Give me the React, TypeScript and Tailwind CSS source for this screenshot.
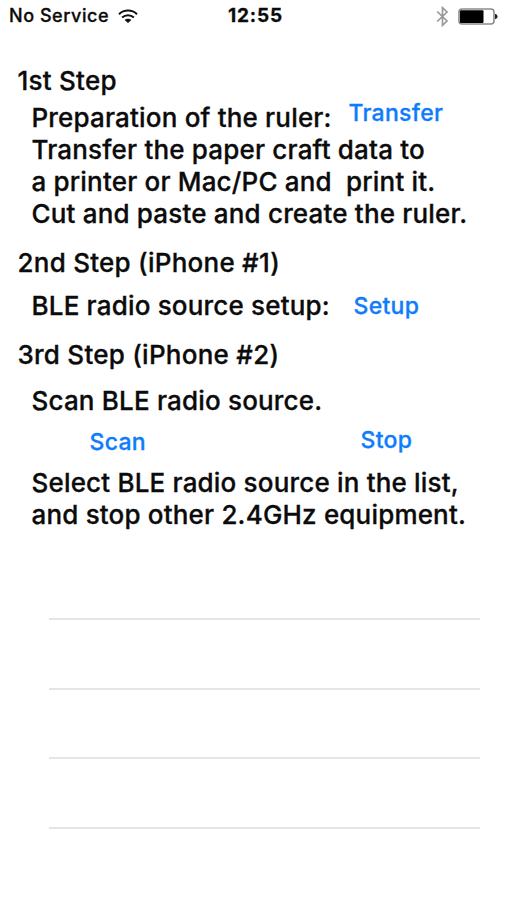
import type { ReactNode } from "react";

const StepTitle = ({ children, className = "" }: { children: ReactNode; className?: string }) => (
  <h2 className={`h-8 pl-[17.5px] leading-8 tracking-[0.25px] whitespace-pre ${className}`}>{children}</h2>
);

const StepText = ({ children, className = "" }: { children: ReactNode; className?: string }) => (
  <p className={`h-8 leading-8 tracking-[0.18px] whitespace-pre ${className}`}>{children}</p>
);

const LinkButton = ({ children, className = "" }: { children: ReactNode; className?: string }) => (
  <button className={`h-7 text-[23px] leading-7 tracking-[0.3px] text-[#0f7dfa] ${className}`}>{children}</button>
);

const StatusBar = () => (
  <header className="grid h-8 grid-cols-3 items-center pl-[9px] pr-[9px] text-lg leading-8">
    <div className="flex items-center gap-[9px] whitespace-nowrap tracking-[0.55px]">
      No Service
      <svg width="20" height="15" viewBox="0 0 20 15" fill="none" stroke="#111" strokeWidth="2">
        <path d="M1 5.2C6 .4 14 .4 19 5.2" />
        <path d="M4.1 8.5C7.4 5.4 12.6 5.4 15.9 8.5" />
        <path d="M10 14L6.6 10.9C8.5 9.2 11.5 9.2 13.4 10.9Z" fill="#111" stroke="none" />
      </svg>
    </div>
    <time className="pl-1 text-center text-[19px] font-bold tracking-[0.8px]">12:55</time>
    <div className="flex items-center justify-end gap-[9px]">
      <svg width="13" height="21" viewBox="0 0 13 21" fill="none" stroke="#999" strokeWidth="1.7">
        <path d="M1.2 5.5L11 15L6.5 19.3V1.7L11 6L1.2 15.5" />
      </svg>
      <svg width="40" height="17" viewBox="0 0 40 17">
        <rect x="1" y="1" width="35" height="15" rx="3" fill="#fff" stroke="#8c8c8c" strokeWidth="1.6" />
        <rect x="2" y="2.3" width="23.5" height="12.6" rx="1" fill="#000" />
        <path d="M37 5.8Q39.6 6.2 39.6 8.5T37 11.2Z" fill="#222" />
      </svg>
    </div>
  </header>
);

const App = () => {
  return (
    <div className="flex h-[900px] w-full flex-col overflow-hidden bg-white font-['Inter',sans-serif] text-[26px] font-medium text-[#0b0b0b] [-webkit-text-stroke:0.3px]">
      <StatusBar />

      <main className="pt-[33px]">
        <StepTitle>1st Step</StepTitle>
        <section className="mt-[5px] pl-[31.5px]">
          <div className="flex items-start">
            <StepText className="w-[317px]">Preparation of the ruler:</StepText>
            <LinkButton className="-mt-[3px]">Transfer</LinkButton>
          </div>
          <StepText>Transfer the paper craft data to</StepText>
          <StepText>a printer or Mac/PC and  print it.</StepText>
          <StepText>Cut and paste and create the ruler.</StepText>
        </section>

        <StepTitle className="mt-[17px]">2nd Step (iPhone #1)</StepTitle>
        <section className="mt-[11px] flex items-start pl-[31.5px]">
          <StepText className="w-[322px]">BLE radio source setup:</StepText>
          <LinkButton className="mt-0.5">Setup</LinkButton>
        </section>

        <StepTitle className="mt-[17px]">3rd Step (iPhone #2)</StepTitle>
        <section className="mt-[14px] pl-[31.5px]">
          <StepText>Scan BLE radio source.</StepText>
          <div className="flex h-[50px] items-start pl-[58px] pt-[9px]">
            <LinkButton className="mt-0.5 w-[271px] text-left">Scan</LinkButton>
            <LinkButton>Stop</LinkButton>
          </div>
          <StepText>Select BLE radio source in the list,</StepText>
          <StepText>and stop other 2.4GHz equipment.</StepText>
        </section>

        <ul className="mt-[19px] ml-[49px] w-[431px]">
          {[0, 1, 2, 3].map((row) => (
            <li key={row} className="h-[69.8px] border-b-2 border-[#e5e5e5]" />
          ))}
        </ul>
      </main>
    </div>
  );
};

export default App;
